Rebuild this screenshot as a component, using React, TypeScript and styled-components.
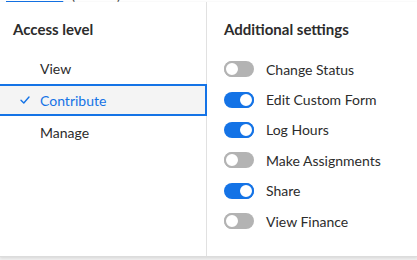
import React from "react";
import styled, { createGlobalStyle } from "styled-components";

const GlobalStyle = createGlobalStyle`
  html, body {
    margin: 0;
    padding: 0;
    background: #ffffff;
  }
  body {
    font-family: Lato, "Liberation Sans", sans-serif;
    color: #2c2c2c;
  }
`;

const Page = styled.div`
  width: 417px;
  height: 260px;
  display: flex;
  flex-direction: column;
  background: #f1f1f1;
  overflow: hidden;
`;

const Peek = styled.div`
  height: 2px;
  overflow: hidden;
  background: #ffffff;
  padding-left: 6px;
  font-size: 14px;
  line-height: 14px;
  white-space: nowrap;
`;

const PeekInner = styled.div`
  margin-top: -12px;
`;

const PeekLink = styled.span`
  color: #1473e6;
  text-decoration: underline;
  margin-right: 8px;
`;

const PeekNote = styled.span`
  color: #4b4b4b;
`;

const Panel = styled.div`
  height: 254px;
  display: grid;
  grid-template-columns: 207px 1fr;
  background: #ffffff;
  border-bottom: 1px solid #dcdcdc;
  box-shadow: 0 1px 3px rgba(0, 0, 0, 0.12);
`;

const Column = styled.div<{ $divider?: boolean }>`
  display: flex;
  flex-direction: column;
  border-right: ${(p) => (p.$divider ? "1px solid #e1e1e1" : "none")};
`;

const Heading = styled.h2<{ $indent: number }>`
  margin: 0;
  padding: 18px 0 0 ${(p) => p.$indent}px;
  height: 35px;
  box-sizing: border-box;
  font-size: 15px;
  font-weight: 700;
  color: #2c2c2c;
`;

const LevelList = styled.div`
  display: flex;
  flex-direction: column;
  margin-top: 15px;
`;

const Level = styled.div<{ $selected?: boolean }>`
  display: flex;
  align-items: center;
  height: 32px;
  box-sizing: border-box;
  margin-left: -2px;
  margin-right: ${(p) => (p.$selected ? "-1px" : "0")};
  padding-left: 20px;
  font-size: 14px;
  color: ${(p) => (p.$selected ? "#1473e6" : "#2c2c2c")};
  background: ${(p) => (p.$selected ? "#f4f4f4" : "transparent")};
  border: 2px solid ${(p) => (p.$selected ? "#1473e6" : "transparent")};
`;

const Check = styled.span`
  width: 20px;
  display: flex;
  align-items: center;
`;

const SettingList = styled.div`
  display: flex;
  flex-direction: column;
  margin-top: 17px;
  padding-left: 17px;
`;

const Setting = styled.label`
  display: flex;
  align-items: center;
  gap: 12px;
  height: 30.4px;
  font-size: 14px;
  color: #2c2c2c;
`;

const Track = styled.span<{ $on: boolean }>`
  position: relative;
  width: 30px;
  height: 16px;
  border-radius: 8px;
  background: ${(p) => (p.$on ? "#1473e6" : "#b3b3b3")};
  flex-shrink: 0;
`;

const Knob = styled.span<{ $on: boolean }>`
  position: absolute;
  top: 0;
  left: ${(p) => (p.$on ? "14px" : "0")};
  width: 16px;
  height: 16px;
  box-sizing: border-box;
  border-radius: 50%;
  background: #ffffff;
  border: 2px solid ${(p) => (p.$on ? "#1473e6" : "#b3b3b3")};
`;

const levels = ["View", "Contribute", "Manage"];
const selectedLevel = "Contribute";

const settings = [
  { name: "Change Status", on: false },
  { name: "Edit Custom Form", on: true },
  { name: "Log Hours", on: true },
  { name: "Make Assignments", on: false },
  { name: "Share", on: true },
  { name: "View Finance", on: false },
];

function CheckIcon() {
  return (
    <svg width="10" height="8" viewBox="0 0 10 8">
      <path
        d="M1 4.2 L3.8 7 L9 1"
        fill="none"
        stroke="#1473e6"
        strokeWidth="1.4"
        strokeLinecap="round"
        strokeLinejoin="round"
      />
    </svg>
  );
}

export default function App() {
  return (
    <Page>
      <GlobalStyle />
      <Peek>
        <PeekInner>
          <PeekLink>Jane Doe</PeekLink>
          <PeekNote>(Owner)</PeekNote>
        </PeekInner>
      </Peek>
      <Panel>
        <Column $divider>
          <Heading $indent={13}>Access level</Heading>
          <LevelList>
            {levels.map((l) => (
              <Level key={l} $selected={l === selectedLevel}>
                <Check>{l === selectedLevel && <CheckIcon />}</Check>
                {l}
              </Level>
            ))}
          </LevelList>
        </Column>
        <Column>
          <Heading $indent={17}>Additional settings</Heading>
          <SettingList>
            {settings.map((s) => (
              <Setting key={s.name}>
                <Track $on={s.on}>
                  <Knob $on={s.on} />
                </Track>
                {s.name}
              </Setting>
            ))}
          </SettingList>
        </Column>
      </Panel>
    </Page>
  );
}
